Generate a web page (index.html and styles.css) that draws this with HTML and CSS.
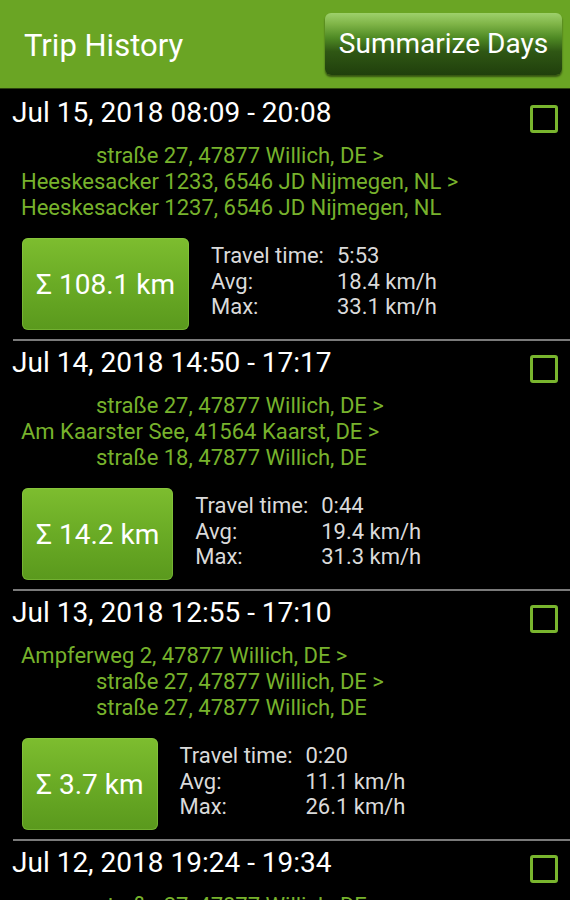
FILE: index.html
```html
<!DOCTYPE html>
<html>
<head>
<meta charset="utf-8">
<link rel="stylesheet" href="styles.css">
</head>
<body>
<header class="appbar">
  <h1 class="title">Trip History</h1>
  <button class="summarize">Summarize Days</button>
</header>
<main class="list">
  <section class="trip">
    <div class="trip-head">
      <span class="date">Jul 15, 2018 08:09 - 20:08</span>
      <span class="check"></span>
    </div>
    <div class="route">
      <div class="stop indent">straße 27, 47877 Willich, DE &gt;</div>
      <div class="stop">Heeskesacker 1233, 6546 JD Nijmegen, NL &gt;</div>
      <div class="stop">Heeskesacker 1237, 6546 JD Nijmegen, NL</div>
    </div>
    <div class="trip-body">
      <div class="dist">Σ 108.1 km</div>
      <div class="stats">
        <span>Travel time:</span><span>5:53</span>
        <span>Avg:</span><span>18.4 km/h</span>
        <span>Max:</span><span>33.1 km/h</span>
      </div>
    </div>
  </section>
  <section class="trip">
    <div class="trip-head">
      <span class="date">Jul 14, 2018 14:50 - 17:17</span>
      <span class="check"></span>
    </div>
    <div class="route">
      <div class="stop indent">straße 27, 47877 Willich, DE &gt;</div>
      <div class="stop">Am Kaarster See, 41564 Kaarst, DE &gt;</div>
      <div class="stop indent">straße 18, 47877 Willich, DE</div>
    </div>
    <div class="trip-body">
      <div class="dist">Σ 14.2 km</div>
      <div class="stats">
        <span>Travel time:</span><span>0:44</span>
        <span>Avg:</span><span>19.4 km/h</span>
        <span>Max:</span><span>31.3 km/h</span>
      </div>
    </div>
  </section>
  <section class="trip">
    <div class="trip-head">
      <span class="date">Jul 13, 2018 12:55 - 17:10</span>
      <span class="check"></span>
    </div>
    <div class="route">
      <div class="stop">Ampferweg 2, 47877 Willich, DE &gt;</div>
      <div class="stop indent">straße 27, 47877 Willich, DE &gt;</div>
      <div class="stop indent">straße 27, 47877 Willich, DE</div>
    </div>
    <div class="trip-body">
      <div class="dist">Σ 3.7 km</div>
      <div class="stats">
        <span>Travel time:</span><span>0:20</span>
        <span>Avg:</span><span>11.1 km/h</span>
        <span>Max:</span><span>26.1 km/h</span>
      </div>
    </div>
  </section>
  <section class="trip">
    <div class="trip-head">
      <span class="date">Jul 12, 2018 19:24 - 19:34</span>
      <span class="check"></span>
    </div>
    <div class="route">
      <div class="stop indent">straße 27, 47877 Willich, DE &gt;</div>
    </div>
  </section>
</main>
</body>
</html>
```
FILE: styles.css
```css
* { box-sizing: border-box; }
html, body { margin: 0; padding: 0; }
body {
  width: 570px;
  height: 900px;
  overflow: hidden;
  background: #000;
  font-family: Roboto, "Noto Sans", sans-serif;
}
.appbar {
  height: 89px;
  background: #6aa524;
  border-bottom: 1px solid #2c420f;
  display: flex;
  align-items: center;
  justify-content: space-between;
  padding: 0 8px 0 24px;
}
.title {
  margin: 0;
  font-weight: 400;
  font-size: 31px;
  color: #fff;
  margin-top: 2px;
}
.summarize {
  width: 237px;
  height: 62px;
  margin-top: -1px;
  border: none;
  border-radius: 6px;
  background: linear-gradient(to bottom, #9ed06c 0%, #7fb447 18%, #4f8a24 40%, #2f5714 62%, #203f0c 100%);
  box-shadow: 0 2px 2px rgba(0,0,0,0.5);
  color: #fff;
  font-family: Roboto, "Noto Sans", sans-serif;
  font-size: 28px;
  padding: 0;
}
.list { padding-top: 2px; }
.trip {
  height: 250px;
  position: relative;
}
.trip::after {
  content: "";
  position: absolute;
  left: 13px;
  right: 0;
  bottom: 0;
  height: 2px;
  background: #7a7a7a;
}
.trip-head {
  height: 44px;
  display: flex;
  justify-content: space-between;
  align-items: flex-start;
  padding: 0 12px 0 12px;
}
.date {
  color: #fff;
  font-size: 28px;
  line-height: 44px;
}
.check {
  width: 28px;
  height: 28px;
  margin-top: 14px;
  border: 3px solid #79b52e;
  border-radius: 3px;
}
.route {
  margin-top: 8px;
  padding-left: 21px;
  color: #77b22c;
  font-size: 22px;
  line-height: 26px;
}
.indent { padding-left: 75px; }
.trip-body {
  margin-top: 17px;
  display: flex;
  align-items: flex-start;
  padding-left: 22px;
  gap: 22px;
}
.dist {
  height: 92px;
  padding: 0 14px;
  display: flex;
  align-items: center;
  border-radius: 6px;
  background: linear-gradient(to bottom, #7dbd2f 0%, #6aab25 50%, #5a991d 100%);
  box-shadow: inset 0 0 0 1px rgba(150,210,80,0.4);
  color: #fff;
  font-size: 28px;
}
.stats {
  margin-top: 5px;
  display: grid;
  grid-template-columns: 126px auto;
  color: #dadada;
  font-size: 22px;
  line-height: 25.5px;
}
```
